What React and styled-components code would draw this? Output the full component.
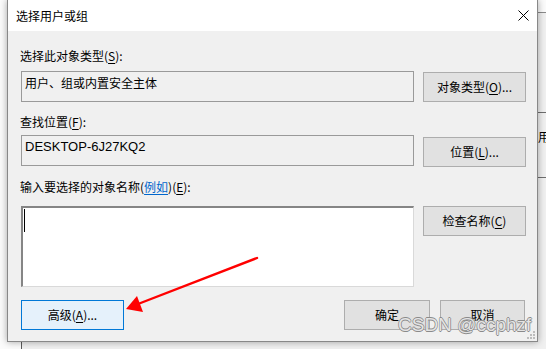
import styled, {createGlobalStyle} from 'styled-components';

const GlobalStyle = createGlobalStyle`
	html, body {
		margin: 0;
		padding: 0;
		background: #ffffff;
	}
	body {
		font-family: "Noto Sans CJK SC", "Noto Sans", sans-serif;
		font-size: 12px;
		color: #000;
	}
`;

const Desktop = styled.div`
	position: relative;
	width: 546px;
	height: 349px;
	overflow: hidden;
	padding-left: 7px;
	box-sizing: border-box;
	background: #fbfbfb;
`;

const BackWindow = styled.div`
	position: absolute;
	left: 21px;
	top: 12px;
	width: 560px;
	height: 360px;
	border-left: 1px solid #5a5a5a;
	border-top: 1px solid #8a8a8a;
	background: #f0f0f0;
	display: flex;
	flex-direction: column;
	padding-left: 516px;
	box-sizing: border-box;
`;

const BackRow = styled.div`
	height: ${p => p.$h}px;
	border-bottom: ${p => (p.$line ? '1px solid #6e6e6e' : 'none')};
	display: flex;
	align-items: center;
	font-size: 12px;
	box-sizing: border-box;
`;

const BackText = styled.span`
	margin-top: ${p => p.$mt}px;
`;

const Dialog = styled.div`
	position: relative;
	width: 531px;
	height: 342px;
	box-sizing: border-box;
	border: 1px solid #888888;
	border-top: none;
	background: #f0f0f0;
	box-shadow: 0 0 7px rgba(0, 0, 0, 0.35);
	display: flex;
	flex-direction: column;
`;

const TitleBar = styled.div`
	height: 31px;
	background: #ffffff;
	display: flex;
	align-items: center;
	justify-content: space-between;
	padding: 0 8px 0 8px;
	flex-shrink: 0;
`;

const Title = styled.span`
	font-size: 12px;
	line-height: 16px;
`;

const CloseButton = styled.div`
	width: 11px;
	height: 11px;
	display: flex;
`;

const Body = styled.div`
	flex: 1;
	padding: 17px 12px 12px 12px;
	display: flex;
	flex-direction: column;
`;

const Label = styled.div`
	line-height: 16px;
	margin-top: ${p => p.$mt || 0}px;
	margin-bottom: ${p => p.$mb}px;
	white-space: nowrap;
`;

const Key = styled.span`
	text-decoration: underline;
	text-underline-offset: 2px;
`;

const Link = styled.span`
	color: #0066cc;
	text-decoration: underline;
	text-underline-offset: 2px;
`;

const Row = styled.div`
	display: grid;
	grid-template-columns: 393px 103px;
	column-gap: 9px;
	align-items: start;
	margin-left: 1px;
`;

const ReadBox = styled.div`
	height: 31px;
	box-sizing: border-box;
	border: 1px solid #9a9a9a;
	background: #f0f0f0;
	padding: 3px 3px;
	line-height: 16px;
	font-family: ${p => (p.$latin ? '"Liberation Sans", "Noto Sans CJK SC", sans-serif' : 'inherit')};
	font-size: ${p => (p.$latin ? '13px' : '12px')};
`;

const TextArea = styled.div`
	height: 81px;
	box-sizing: border-box;
	background: #ffffff;
	border-top: 2px solid #858585;
	border-left: 2px solid #858585;
	border-right: 1px solid #d9d9d9;
	border-bottom: 1px solid #d9d9d9;
	padding: 1px 0 0 1px;
`;

const Caret = styled.div`
	width: 1px;
	height: 23px;
	background: #000;
`;

const Button = styled.div`
	height: ${p => p.$h || 30}px;
	width: ${p => (p.$w ? `${p.$w}px` : 'auto')};
	box-sizing: border-box;
	margin-top: ${p => p.$mt || 0}px;
	border: 1px solid ${p => (p.$focus ? '#0078d7' : '#adadad')};
	background: ${p => (p.$focus ? '#e5f1fb' : '#e1e1e1')};
	display: flex;
	align-items: center;
	justify-content: center;
	line-height: 16px;
	white-space: nowrap;
`;

const Footer = styled.div`
	display: flex;
	margin-top: 13px;
	margin-left: 1px;
	gap: 10px;
`;

const Spacer = styled.div`
	flex: 1;
`;

const Overlay = styled.svg`
	position: absolute;
	left: 0;
	top: 0;
	pointer-events: none;
`;

const Watermark = styled.div`
	position: absolute;
	left: 398px;
	top: 314px;
	font-family: "Liberation Sans", Arial, sans-serif;
	font-size: 19px;
	line-height: 22px;
	color: rgba(245, 245, 245, 0.85);
	text-shadow:
		0.7px 0 0 #8a8a8a,
		-0.7px 0 0 #8a8a8a,
		0 0.7px 0 #8a8a8a,
		0 -0.7px 0 #8a8a8a;
	white-space: nowrap;
`;

const Grip = styled.svg`
	position: absolute;
	right: 2px;
	bottom: 2px;
`;

export default function App() {
	return (
		<>
			<GlobalStyle />
			<Desktop>
				<BackWindow>
					<BackRow $h={100} $line />
					<BackRow $h={65} $line>
						<BackText $mt={-17}>用)</BackText>
					</BackRow>
				</BackWindow>
				<Dialog>
					<TitleBar>
						<Title>选择用户或组</Title>
						<CloseButton>
							<svg width="11" height="11" viewBox="0 0 11 11">
								<path d="M0.5 0.5 L10.5 10.5 M10.5 0.5 L0.5 10.5" stroke="#000" strokeWidth="1" />
							</svg>
						</CloseButton>
					</TitleBar>
					<Body>
						<Label $mb={7}>选择此对象类型(<Key>S</Key>):</Label>
						<Row>
							<ReadBox>用户、组或内置安全主体</ReadBox>
							<Button $mt={1}>对象类型(<Key>O</Key>)...</Button>
						</Row>
						<Label $mt={12} $mb={5}>查找位置(<Key>F</Key>):</Label>
						<Row>
							<ReadBox $latin>DESKTOP-6J27KQ2</ReadBox>
							<Button $mt={2}>位置(<Key>L</Key>)...</Button>
						</Row>
						<Label $mt={12} $mb={11}>
							输入要选择的对象名称(<Link>例如</Link>)(<Key>E</Key>):
						</Label>
						<Row>
							<TextArea>
								<Caret />
							</TextArea>
							<Button>检查名称(<Key>C</Key>)</Button>
						</Row>
						<Footer>
							<Button $w={103} $focus>高级(<Key>A</Key>)...</Button>
							<Spacer />
							<Button $w={86}>确定</Button>
							<Button $w={85}>取消</Button>
						</Footer>
					</Body>
					<Grip width="8" height="8" viewBox="0 0 8 8">
						<rect x="6" y="0" width="2" height="2" fill="#bcbcbc" />
						<rect x="3" y="3" width="2" height="2" fill="#bcbcbc" />
						<rect x="6" y="3" width="2" height="2" fill="#bcbcbc" />
						<rect x="0" y="6" width="2" height="2" fill="#bcbcbc" />
						<rect x="3" y="6" width="2" height="2" fill="#bcbcbc" />
						<rect x="6" y="6" width="2" height="2" fill="#bcbcbc" />
					</Grip>
				</Dialog>
				<Overlay width="546" height="349" viewBox="0 0 546 349">
					<line x1="257" y1="258" x2="138" y2="304" stroke="#ff0000" strokeWidth="2.4" strokeLinecap="round" />
					<polygon points="126,309 137,296 143,312" fill="#ff0000" />
				</Overlay>
				<Watermark>CSDN @ccphzf</Watermark>
			</Desktop>
		</>
	);
}
